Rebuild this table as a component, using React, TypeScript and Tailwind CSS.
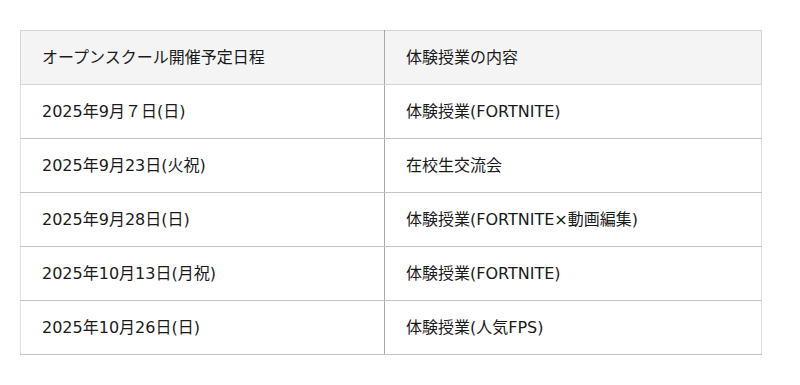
const ROWS = [
  { date: '2025年9月７日(日)', body: '体験授業(FORTNITE)' },
  { date: '2025年9月23日(火祝)', body: '在校生交流会' },
  { date: '2025年9月28日(日)', body: '体験授業(FORTNITE×動画編集)' },
  { date: '2025年10月13日(月祝)', body: '体験授業(FORTNITE)' },
  { date: '2025年10月26日(日)', body: '体験授業(人気FPS)' },
]

export default function App() {
  return (
    <div
      className="w-[800px] h-[385px] bg-white pt-[30px] pl-[20px] text-[#1a1a1a]"
      style={{ fontFamily: '"DejaVu Sans", "Noto Sans CJK JP", sans-serif' }}
    >
      <table className="w-[742px] border-collapse text-[16px] table-fixed">
        <colgroup>
          <col className="w-[364px]" />
          <col />
        </colgroup>
        <thead>
          <tr className="bg-[#f4f4f4]">
            <th className="h-[54px] border border-[#d4d4d4] border-r-[#a8a8a8] font-normal text-left pl-[21px]">
              オープンスクール開催予定日程
            </th>
            <th className="h-[54px] border border-[#d4d4d4] border-l-[#a8a8a8] font-normal text-left pl-[21px]">
              体験授業の内容
            </th>
          </tr>
        </thead>
        <tbody>
          {ROWS.map(r => (
            <tr key={r.date}>
              <td className="h-[54px] border border-[#c4c4c4] border-l-[#e0e0e0] border-r-[#a8a8a8] pl-[21px]">{r.date}</td>
              <td className="h-[54px] border border-[#c4c4c4] border-r-[#e0e0e0] border-l-[#a8a8a8] pl-[21px]">{r.body}</td>
            </tr>
          ))}
        </tbody>
      </table>
    </div>
  )
}
